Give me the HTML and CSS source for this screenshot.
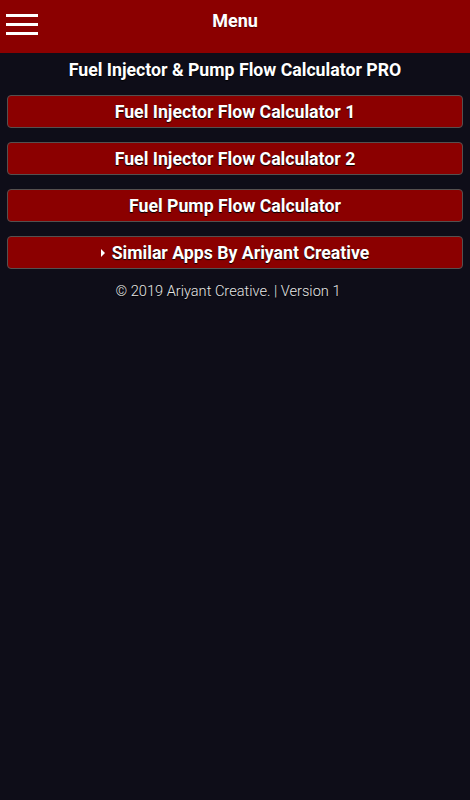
FILE: index.html
```html
<!DOCTYPE html>
<html lang="en">
<head>
  <meta charset="UTF-8" />
  <meta name="viewport" content="width=device-width, initial-scale=1.0"/>
  <title>Fuel Injector &amp; Pump Flow Calculator PRO</title>
  <link rel="stylesheet" href="styles.css">
</head>
<body>
  <header class="topbar">
    <button class="menu-toggle" aria-label="Open menu">
      <span></span><span></span><span></span>
    </button>
    <h1>Menu</h1>
  </header>

  <main class="content">
    <h2 class="app-title">Fuel Injector &amp; Pump Flow Calculator PRO</h2>

    <nav class="menu">
      <a class="menu-btn" href="#">Fuel Injector Flow Calculator 1</a>
      <a class="menu-btn" href="#">Fuel Injector Flow Calculator 2</a>
      <a class="menu-btn" href="#">Fuel Pump Flow Calculator</a>
      <a class="menu-btn" href="#"><span class="caret"></span>Similar Apps By Ariyant Creative</a>
    </nav>

    <p class="footer-note">&copy; 2019 Ariyant Creative. | Version 1</p>
  </main>
</body>
</html>
```

FILE: styles.css
```css
body {
  margin: 0;
  background: #0e0d18;
  font-family: Roboto, 'Noto Sans', sans-serif;
  color: #fff;
}

.topbar {
  position: relative;
  height: 53px;
  background: #8b0000;
  display: flex;
  justify-content: center;
}

.topbar h1 {
  margin: 0;
  font-size: 18px;
  font-weight: 700;
  line-height: 42px;
  text-shadow: 0 1px 1px rgba(0, 0, 0, 0.4);
}

.menu-toggle {
  position: absolute;
  left: 6px;
  top: 14px;
  width: 32px;
  padding: 0;
  border: none;
  background: none;
  display: flex;
  flex-direction: column;
  gap: 6.5px;
}

.menu-toggle span {
  display: block;
  height: 2.5px;
  background: #fff;
}

.content {
  padding: 0 7px;
}

.app-title {
  margin: 0;
  padding-top: 6px;
  font-size: 17.7px;
  font-weight: 700;
  line-height: 22px;
  text-align: center;
  text-shadow: 0 1px 1px #000;
}

.menu {
  display: flex;
  flex-direction: column;
  gap: 14px;
  margin-top: 14px;
}

.menu-btn {
  display: flex;
  align-items: center;
  justify-content: center;
  height: 31px;
  background: #8b0000;
  border: 1px solid #55504f;
  border-radius: 4px;
  color: #fff;
  text-decoration: none;
  font-size: 17.7px;
  font-weight: 700;
  text-shadow: 0 1px 1px #000;
}

.caret {
  width: 0;
  height: 0;
  margin-right: 7px;
  border-top: 4px solid transparent;
  border-bottom: 4px solid transparent;
  border-left: 4px solid #fff;
}

.footer-note {
  margin: 12px 0 0;
  padding-right: 14px;
  font-size: 14.6px;
  font-weight: 300;
  line-height: 20px;
  text-align: center;
  color: #e6e6e6;
  text-shadow: 0 1px 1px #000;
}
```
